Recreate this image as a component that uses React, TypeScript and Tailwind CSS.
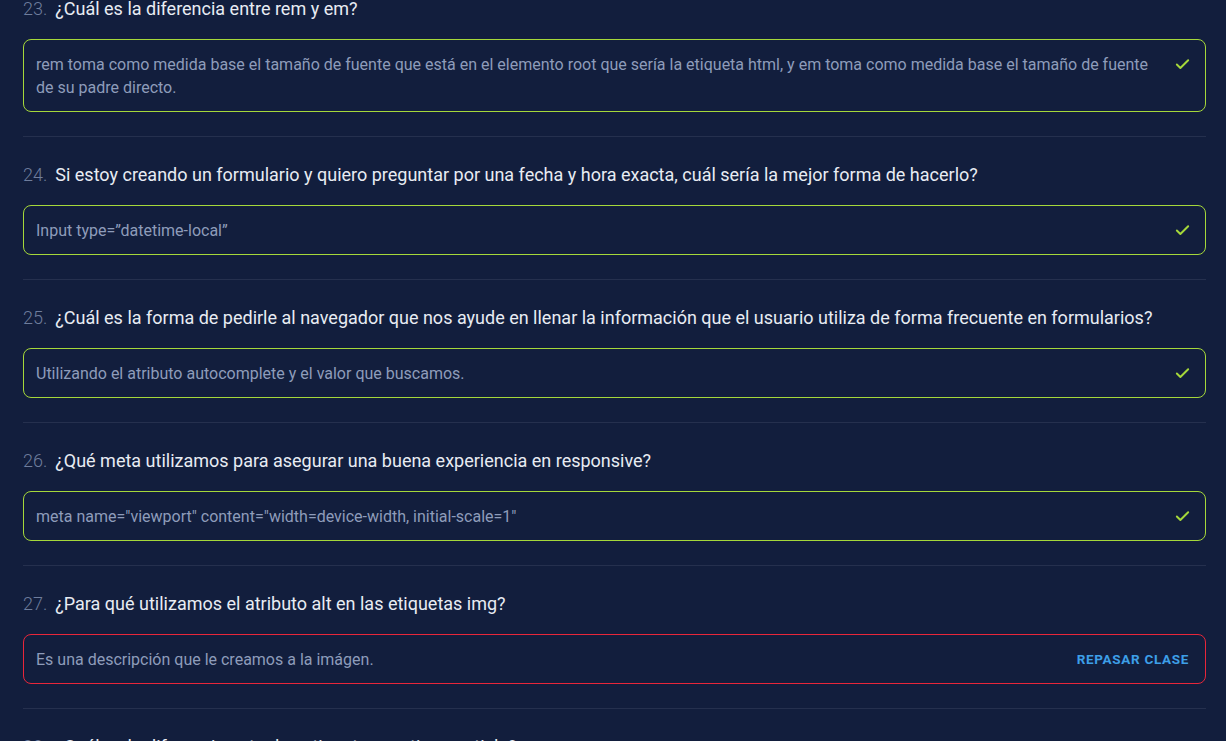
import { Check } from 'lucide-react';

type Item = {
  n: number;
  question: string;
  answer: string;
  ok: boolean;
};

const ITEMS: Item[] = [
  {
    n: 23,
    question: '¿Cuál es la diferencia entre rem y em?',
    answer:
      'rem toma como medida base el tamaño de fuente que está en el elemento root que sería la etiqueta html, y em toma como medida base el tamaño de fuente de su padre directo.',
    ok: true,
  },
  {
    n: 24,
    question:
      'Si estoy creando un formulario y quiero preguntar por una fecha y hora exacta, cuál sería la mejor forma de hacerlo?',
    answer: 'Input type=”datetime-local”',
    ok: true,
  },
  {
    n: 25,
    question:
      '¿Cuál es la forma de pedirle al navegador que nos ayude en llenar la información que el usuario utiliza de forma frecuente en formularios?',
    answer: 'Utilizando el atributo autocomplete y el valor que buscamos.',
    ok: true,
  },
  {
    n: 26,
    question: '¿Qué meta utilizamos para asegurar una buena experiencia en responsive?',
    answer: 'meta name="viewport" content="width=device-width, initial-scale=1"',
    ok: true,
  },
  {
    n: 27,
    question: '¿Para qué utilizamos el atributo alt en las etiquetas img?',
    answer: 'Es una descripción que le creamos a la imágen.',
    ok: false,
  },
  {
    n: 28,
    question: '¿Cuál es la diferencia entre las etiquetas section y article?',
    answer: '',
    ok: true,
  },
];

function Question({ item }: { item: Item }) {
  return (
    <div className="flex items-center gap-2 h-6 leading-6 whitespace-nowrap">
      <span className="text-[18px] font-light text-[#6e7d9c]">{item.n}.</span>
      <span className="text-[18px] text-[#e8ecf3]">{item.question}</span>
    </div>
  );
}

function Answer({ item }: { item: Item }) {
  return (
    <div
      className={
        'mt-[18px] flex items-start justify-between gap-4 rounded-lg border pl-3 pr-4 pt-[13px] pb-3 ' +
        (item.ok ? 'border-[#a5d83a]' : 'border-[#e8263a]')
      }
    >
      <p className="text-[16px] leading-[23px] text-[#8e9cba]">{item.answer}</p>
      {item.ok ? (
        <Check className="mt-[3px] -mr-[2px] shrink-0 text-[#a5d83a]" size={17} strokeWidth={2.75} />
      ) : (
        <button className="shrink-0 text-[13.5px] leading-[23px] font-bold tracking-wider uppercase text-[#3d9fe8]">
          Repasar clase
        </button>
      )}
    </div>
  );
}

export default function App() {
  return (
    <div className="min-h-screen bg-[#121e3d] font-['Roboto',sans-serif] overflow-hidden">
      <div className="pl-[23px] pr-5 -mt-[3px]">
        {ITEMS.map((item, i) => (
          <section key={item.n} className={i > 0 ? 'border-t border-[#25304e] pt-[26px]' : ''}>
            <Question item={item} />
            {item.answer && <Answer item={item} />}
            <div className="h-6" />
          </section>
        ))}
      </div>
    </div>
  );
}
